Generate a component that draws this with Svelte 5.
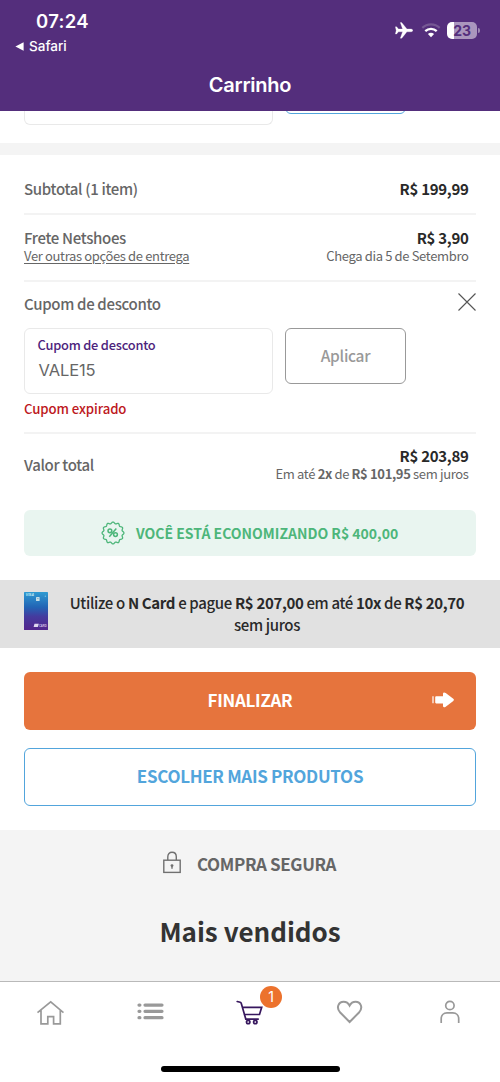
<script>
  const seal = Array.from({ length: 72 }, (_, i) => {
    const a = (i * Math.PI) / 36;
    const r = 10.2 + 0.8 * Math.cos(a * 12);
    return `${(12 + r * Math.sin(a)).toFixed(2)},${(12 - r * Math.cos(a)).toFixed(2)}`;
  }).join(' ');
</script>

<div class="screen">
  <header>
    <div class="status">
      <div class="left">
        <div class="time">07:24</div>
        <div class="back">
          <svg width="9" height="9" viewBox="0 0 9 9"><path d="M.4 4.5 8.6.3v8.4z" fill="#fff" /></svg>
          <span>Safari</span>
        </div>
      </div>
      <div class="right">
        <svg width="18" height="17" viewBox="0 0 18 17"><path fill="#fff" stroke="#fff" stroke-width=".3" d="M17.8 8.4c0 .8-.9 1.4-2.6 1.4h-3.3L7 15.9c-.2.3-.5.3-.8.3h-.9L7.6 9.8H3.4L1.9 11.7c-.2.2-.4.3-.7.3H.4l.8-3.600-.8-3.600h.8c.3 0 .5.1.7.3l1.500 1.900h4.200L5.300.6h.9c.3 0 .6 0 .8.3L11.900 7h3.300c1.700 0 2.600.6 2.600 1.400z" /></svg>
        <svg width="20" height="15" viewBox="0 0 20 15" fill="none">
          <path d="M1.300 4.900a12.600 12.600 0 0 1 17.400 0" stroke="#765894" stroke-width="2.200" />
          <path d="M4.300 8.200a8.300 8.300 0 0 1 11.400 0" stroke="#fff" stroke-width="2.300" />
          <path d="M6.900 11.100a4.500 4.500 0 0 1 6.200 0L10 14.300z" fill="#fff" />
        </svg>
        <div class="battery"><b>23</b></div>
        <i class="tip"></i>
      </div>
    </div>
    <h1>Carrinho</h1>
  </header>

  <div class="prev"><div class="pfield"></div><div class="pbutton"></div></div>
  <div class="band"></div>

  <main>
    <section class="row subtotal">
      <span class="label">Subtotal (1 item)</span>
      <span class="price">R$ 199,99</span>
    </section>
    <section class="row freight">
      <div><div class="label">Frete Netshoes</div><div class="small link">Ver outras opções de entrega</div></div>
      <div class="end"><div class="price">R$ 3,90</div><div class="small">Chega dia 5 de Setembro</div></div>
    </section>
    <section class="coupon">
      <div class="chead">
        <span class="label">Cupom de desconto</span>
        <svg width="18" height="18" viewBox="0 0 18 18"><path d="M.5.5l17 17M17.500.5l-17 17" stroke="#555" stroke-width="1.100" /></svg>
      </div>
      <div class="cform">
        <div class="field"><span class="flabel">Cupom de desconto</span><span class="value">VALE15</span></div>
        <div class="apply">Aplicar</div>
      </div>
      <div class="error">Cupom expirado</div>
    </section>
    <section class="row total">
      <span class="label sum">Valor total</span>
      <div class="end"><div class="price">R$ 203,89</div><div class="small">Em até <b>2x</b> de <b>R$ 101,95</b> sem juros</div></div>
    </section>
    <div class="saving">
      <svg width="24" height="24" viewBox="0 0 24 24" fill="none" stroke="#4db67a" stroke-width="1.300">
        <polygon points={seal} stroke-linejoin="round" />
        <g stroke-width="1.500"><circle cx="8.900" cy="9.800" r="1.900" /><circle cx="14.500" cy="13.600" r="1.900" /><path d="M15.300 7.600 8.300 15.800" /></g>
      </svg>
      <span>VOCÊ ESTÁ ECONOMIZANDO R$ 400,00</span>
    </div>
  </main>

  <div class="ncard">
    <svg width="24" height="38" viewBox="0 0 24 38">
      <defs><linearGradient id="card" x1="0" y1="0" x2="0" y2="1"><stop offset="0" stop-color="#2f9bd2" /><stop offset=".4" stop-color="#2264b5" /><stop offset=".65" stop-color="#453a9e" /><stop offset="1" stop-color="#53258c" /></linearGradient></defs>
      <rect width="24" height="38" rx=".6" fill="url(#card)" />
      <text x="1.800" y="4.400" font-family="Liberation Sans" font-size="3.500" font-weight="700" font-style="italic" fill="#c4ecf5">VISA</text>
      <rect x="12" y="5" width="3.600" height="4" rx=".6" fill="#c5dfe8" /><path d="M13 6.500h1.600" stroke="#688ba6" stroke-width=".5" />
      <circle cx="21.400" cy="4.200" r=".8" fill="#69bedf" />
      <path d="M10.500 31.700h4.300l-.9 3.300H9.600z" fill="#e0d7ef" />
      <text x="14.900" y="34.700" font-family="Liberation Sans" font-size="2.700" font-weight="700" fill="#d1c2e4">CARD</text>
    </svg>
    <p>Utilize o <b>N Card</b> e pague <b>R$ 207,00</b> em até <b>10x</b> de <b>R$ 20,70</b><br />sem juros</p>
  </div>

  <div class="actions">
    <div class="finish"><span>FINALIZAR</span>
      <svg width="23" height="16" viewBox="0 0 23 16" fill="#fff"><path d="M.4 4.300h1.200v7H.4zM4.100 4.300h6.900V1.700Q11 .4 12.200.4q.8 0 1.500.6l7.600 5.700q1.400 1.100 0 2.300l-7.600 5.800q-.7.500-1.500.5-1.200 0-1.200-1.400v-2.500H4.100q-.9 0-.9-.8V5.200q0-.9.900-.9z" /></svg>
    </div>
    <div class="more">ESCOLHER MAIS PRODUTOS</div>
  </div>

  <div class="bottom">
    <div class="secure">
      <svg width="20" height="23" viewBox="0 0 20 23" fill="none" stroke="#707070" stroke-width="1.400"><rect x="1.800" y="9.200" width="16.400" height="12.200" /><path d="M5.800 9V5.800C5.800 3 7.500 1.300 10 1.300s4.300 1.700 4.300 4.500V9" /><circle cx="10" cy="14.600" r="1.400" fill="#707070" stroke="none" /><path d="M10 15v2.800" /></svg>
      <span>COMPRA SEGURA</span>
    </div>
    <h2>Mais vendidos</h2>
  </div>

  <nav>
    <div class="tabs">
      <div><svg width="28" height="26" viewBox="0 0 28 26" fill="none" stroke="#999" stroke-width="1.700"><path d="M1.500 12.600 14.700 1.900 27.500 12.600M5 9.900V23.800h6.800v-7.200h5.800v7.200h6.700V9.900" /></svg></div>
      <div><svg width="28" height="26" viewBox="0 0 28 26" stroke="#999" stroke-width="3.200" stroke-linecap="round"><path d="M3 5.100h.9M9 5.100h17M3 11.300h.9M9 11.300h17M3 17.700h.9M9 17.700h17" /></svg></div>
      <div class="cart"><svg width="28" height="26" viewBox="0 0 28 26" fill="none" stroke="#37175e" stroke-width="1.700"><path d="M1.200 1.500 4.200 2.300Q5 2.500 5.300 3.400L9.800 19.100H22.200M6.500 7.300H25.700L23.500 14.500H8.300" stroke-linecap="round" /><circle cx="12.200" cy="22" r="1.700" /><circle cx="19.300" cy="22" r="1.700" /></svg><span class="badge">1</span></div>
      <div><svg width="28" height="26" viewBox="0 0 28 26" fill="none" stroke="#999" stroke-width="2"><path d="M13.600 22 4.200 12.500C-.3 7.600 2.700 1.700 7.600 1.700c2.900 0 4.900 1.700 6 3.900 1.100-2.200 3.100-3.900 6-3.900 4.900 0 7.900 5.900 3.400 10.800z" /></svg></div>
      <div><svg width="28" height="26" viewBox="0 0 28 26" fill="none" stroke="#999" stroke-width="1.700"><circle cx="13.900" cy="5.500" r="4.200" /><path d="M5.200 23.100v-4.300c0-3.500 2.300-5.900 5.800-5.900h5.800c3.500 0 5.900 2.400 5.900 5.900v4.300" /></svg></div>
    </div>
    <div class="homebar"></div>
  </nav>
</div>

<style>
  :global(body) { margin: 0; background: #fff; }
  * { box-sizing: border-box; }
  .screen { width: 500px; height: 1082px; overflow: hidden; background: #fff; color: #666; font-family: "Noto Sans CJK SC", "Noto Sans", sans-serif; display: flex; flex-direction: column; }
  .screen > * { flex-shrink: 0; }
  svg { display: block; flex-shrink: 0; }
  header { height: 111px; background: #542e7c; color: #fff; font-family: Inter, sans-serif; }
  .status { display: flex; justify-content: space-between; height: 68px; }
  .left { padding: 9px 0 0 15px; }
  .time { padding-left: 21px; font-size: 18.500px; line-height: 24px; font-weight: 600; letter-spacing: .3px; }
  .back { display: flex; align-items: center; gap: 5px; font-size: 13.500px; line-height: 18px; margin-top: 4px; font-weight: 500; letter-spacing: 0; }
  .right { display: flex; align-items: center; height: 60px; padding-right: 20px; }
  .right svg:nth-child(2) { margin: 0 6px 0 8px; }
  .battery { width: 30px; height: 17px; border-radius: 5px; background: linear-gradient(90deg, #fff 0 7px, #aa96bd 7px); color: #542e7c; font-size: 14px; line-height: 17px; text-align: center; }
  .battery b { font-weight: 700; letter-spacing: -.3px; }
  .tip { width: 2px; height: 5px; margin-left: 1px; border-radius: 0 3px 3px 0; background: #9e88b3; }
  h1 { margin: 4px 0 0; text-align: center; font-size: 20px; line-height: 26px; font-weight: 600; letter-spacing: -.25px; }
  .prev { height: 32px; padding-left: 24px; display: flex; gap: 12px; }
  .pfield { width: 249px; height: 14px; border: 1px solid #e9e9e9; border-top: 0; border-radius: 0 0 6px 6px; }
  .pbutton { width: 121px; height: 3px; overflow: hidden; position: relative; }
  .pbutton::after { content: ""; position: absolute; inset: -20px 0 0; border: 1px solid #52a5dc; border-radius: 6px; }
  .band { height: 12px; background: #f4f4f4; }
  main { padding: 0 24px; height: 425px; }
  .row { display: flex; justify-content: space-between; border-bottom: 2px solid #f3f3f3; padding-right: 7.500px; }
  .label { font-size: 15px; line-height: 20px; font-weight: 500; letter-spacing: -.33px; color: #666; white-space: nowrap; }
  .price { font-size: 15px; line-height: 20px; font-weight: 700; color: #292929; letter-spacing: -.3px; white-space: nowrap; }
  .small { font-size: 13px; line-height: 18px; font-weight: 400; letter-spacing: -.35px; white-space: nowrap; }
  .small b { font-weight: 700; }
  .end { text-align: right; }
  .subtotal { height: 60px; padding-top: 24px; }
  .freight { height: 67px; padding-top: 13px; }
  .freight .small { margin-top: -1px; }
  .link { text-decoration: underline; text-underline-offset: 2px; }
  .coupon { height: 152px; border-bottom: 2px solid #f3f3f3; padding-top: 11px; }
  .chead { display: flex; justify-content: space-between; height: 35px; padding-top: 1px; }
  .chead svg { margin-top: -1px; }
  .cform { display: flex; gap: 12px; align-items: flex-start; }
  .field { width: 249px; height: 66px; border: 1px solid #e9e9e9; border-radius: 6px; padding: 6px 12.500px; display: flex; flex-direction: column; }
  .flabel { font-size: 12.800px; line-height: 19px; color: #4d247c; font-weight: 500; letter-spacing: -.2px; }
  .value { font-family: Inter, sans-serif; font-size: 16.500px; line-height: 22px; padding: 5px 0 0 1px; font-weight: 400; letter-spacing: -.1px; }
  .apply { width: 121px; height: 56px; border: 1px solid #999; border-radius: 6px; text-align: center; font-size: 15.500px; line-height: 53px; color: #999; font-weight: 500; letter-spacing: -.3px; }
  .error { font-size: 13.200px; line-height: 20px; margin-top: 5px; color: #bd1721; font-weight: 500; letter-spacing: -.1px; }
  .total { border: 0; height: 76px; padding-top: 12px; }
  .total .small { margin-top: -1px; }
  .sum { padding-top: 9px; }
  .saving { height: 46px; border-radius: 6px; background: #e9f5f0; display: flex; align-items: center; padding-left: 77px; gap: 11px; color: #4db67a; font-size: 14px; line-height: 20px; font-weight: 700; white-space: nowrap; }
  .ncard { height: 68px; background: #e1e1e1; display: flex; padding: 12px 24px; color: #292929; }
  .ncard p { margin: 0; flex: 1; padding-left: 10px; text-align: center; font-size: 15px; line-height: 22px; font-weight: 500; letter-spacing: -.35px; white-space: nowrap; }
  .actions { padding: 24px 24px 0; height: 182px; }
  .finish { height: 58px; border-radius: 6px; background: #e6743d; color: #fff; display: grid; grid-template-columns: 1fr auto 1fr; align-items: center; font-size: 17px; line-height: 24px; font-weight: 700; letter-spacing: -.3px; }
  .finish span { grid-column: 2; margin-top: -2px; }
  .finish svg { justify-self: end; margin-right: 21.500px; margin-top: -2px; }
  .more { height: 58px; margin-top: 18px; border: 1px solid #52a5dc; border-radius: 6px; text-align: center; line-height: 54px; font-size: 17px; font-weight: 700; letter-spacing: -.32px; color: #52a5dc; }
  .bottom { height: 151px; background: #f4f4f4; padding-top: 21px; }
  .secure { display: flex; padding-left: 162px; gap: 15px; font-size: 17px; line-height: 26px; height: 28px; font-weight: 700; letter-spacing: -.37px; }
  .secure svg { margin-top: 0; }
  h2 { margin: 29px 0 0; text-align: center; font-size: 26px; line-height: 46px; font-weight: 700; color: #333; }
  nav { height: 101px; border-top: 1px solid #b9b9b9; background: #fff; }
  .tabs { display: grid; grid-template-columns: repeat(5, 100px); padding-top: 18px; height: 84px; justify-items: center; }
  .cart { position: relative; }
  .badge { position: absolute; left: 24px; top: -14px; width: 22px; height: 22px; border-radius: 50%; background: #ec722d; color: #fff; text-align: center; font-family: Inter, sans-serif; font-size: 14px; line-height: 22px; }
  .homebar { width: 179px; height: 6px; margin: 0 auto; border-radius: 3px; background: #000; }
</style>
